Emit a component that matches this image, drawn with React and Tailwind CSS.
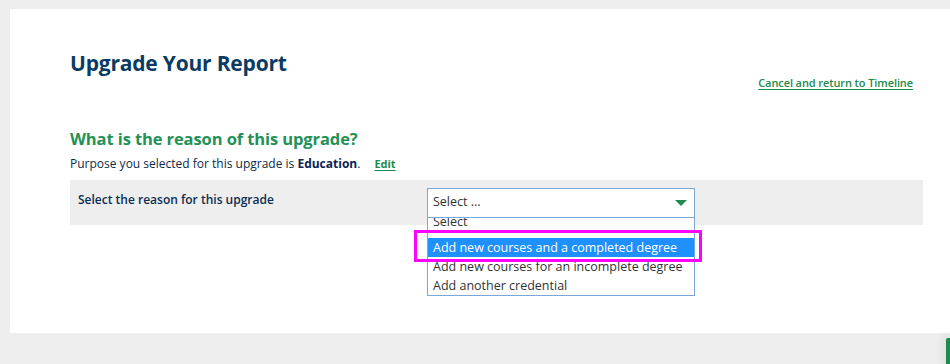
import React from 'react';

const options = [
  'Add new courses and a completed degree',
  'Add new courses for an incomplete degree',
  'Add another credential',
];

export default function App() {
  return (
    <div className="relative w-[950px] h-[364px] overflow-hidden bg-[#eeeeee] pt-[9px] pl-[10px] font-['Open_Sans',sans-serif]">
      {/* Main card */}
      <div className="bg-white h-[324px] pl-[60px] pr-[27px] pt-[40px]">
        <div className="flex items-start justify-between">
          <h1 className="text-[21px] leading-[28px] font-bold text-[#0b3a64] tracking-[-0.2px]">
            Upgrade Your Report
          </h1>
          <a href="#" className="mt-[26px] mr-[10px] text-[11px] font-semibold text-[#1e8a4c] underline underline-offset-2 tracking-[-0.1px]">
            Cancel and return to Timeline
          </a>
        </div>

        <h2 className="mt-[36px] text-[16.5px] leading-[22px] font-bold text-[#239156] tracking-[-0.1px]">
          What is the reason of this upgrade?
        </h2>
        <p className="mt-[5px] text-[12px] leading-[18px] text-[#0c2a4a]">
          Purpose you selected for this upgrade is <b className="font-bold text-[#0b2350]">Education</b>.
          <a href="#" className="ml-[14px] text-[11px] font-bold text-[#1e8a4c] underline underline-offset-2">Edit</a>
        </p>

        {/* Reason row */}
        <div className="mt-[7px] bg-[#eeeeee] h-[45px] flex items-start pl-[8px] pt-[8px]">
          <div className="w-[349px] pt-[3px] text-[12px] font-semibold text-[#0b2d52]">
            Select the reason for this upgrade
          </div>
          <div className="relative w-[268px]">
            <div className="h-[30px] border border-[#7aa7d8] bg-white flex items-center justify-between pl-[5px] pr-[7px] text-[12.5px] text-[#333333]">
              <span>Select ...</span>
              <svg width="12" height="6" viewBox="0 0 12 6">
                <path d="M0 0 L12 0 L6 6 Z" fill="#1e8a4c" />
              </svg>
            </div>
            {/* Open dropdown list */}
            <div className="absolute left-0 top-[29px] w-[268px] h-[79px] border border-[#7aa7d8] bg-white overflow-hidden z-10">
              <div className="-mt-[6px] h-[26px] leading-[19px] px-[5px] text-[12.5px] text-[#333333]">Select</div>
              {options.map((o, i) => (
                <div
                  key={o}
                  className={`h-[19px] leading-[19px] px-[5px] text-[12.5px] ${i === 0 ? 'bg-[#1e90ff] text-white' : 'text-[#333333]'}`}
                >
                  {o}
                </div>
              ))}
            </div>
            {/* Highlight frame */}
            <div className="absolute left-[-13px] top-[42px] w-[288px] h-[32px] border-[3px] border-[#ff00ff] z-20" />
          </div>
        </div>
      </div>

      {/* Floating tab bottom right */}
      <div className="absolute right-0 bottom-0 w-[4px] h-[26px] bg-[#1e8a4c] shadow-[0_0_8px_4px_rgba(0,0,0,0.06)] rounded-tl-[2px]" />
    </div>
  );
}
